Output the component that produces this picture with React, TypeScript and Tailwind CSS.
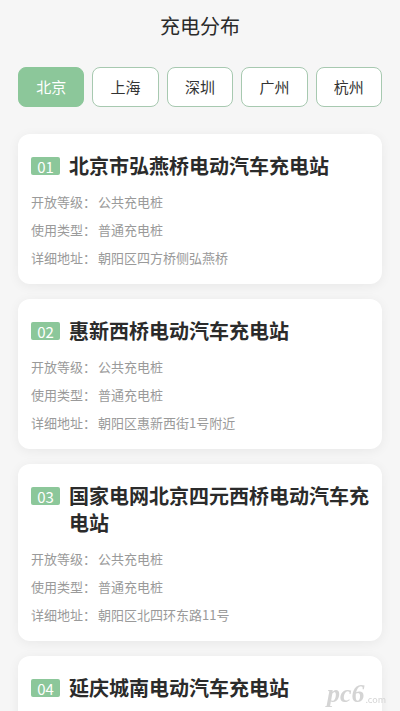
import React, { useState } from 'react';

interface Station {
    name: string;
    level: string;
    kind: string;
    address: string;
}

const cities = ['北京', '上海', '深圳', '广州', '杭州'];

const stations: Station[] = [
    { name: '北京市弘燕桥电动汽车充电站', level: '公共充电桩', kind: '普通充电桩', address: '朝阳区四方桥侧弘燕桥' },
    { name: '惠新西桥电动汽车充电站', level: '公共充电桩', kind: '普通充电桩', address: '朝阳区惠新西街1号附近' },
    { name: '国家电网北京四元西桥电动汽车充电站', level: '公共充电桩', kind: '普通充电桩', address: '朝阳区北四环东路11号' },
    { name: '延庆城南电动汽车充电站', level: '公共充电桩', kind: '普通充电桩', address: '延庆区城南街道' },
];

const StationCard: React.FC<{ index: number; station: Station }> = ({ index, station }) => {
    const num = String(index + 1).padStart(2, '0');
    return (
        <div className="bg-white rounded-[12px] shadow-[0_2px_12px_rgba(0,0,0,0.06)] px-[13px] pt-[18px] pb-[12px]">
            <div className="flex items-start gap-[9px]">
                <span className="mt-[5px] h-[18px] w-[29px] flex items-center justify-center bg-[#8cc79a] text-white text-[15px] leading-none rounded-[2px]">
                    {num}
                </span>
                <h3 className="flex-1 text-[20px] leading-[27px] font-bold text-[#2b2b2b]">{station.name}</h3>
            </div>
            {/* info rows */}
            <div className="mt-[9px] text-[13px] leading-[28px] text-[#9a9a9a]">
                <div className="flex"><span className="w-[67px]">开放等级：</span><span>{station.level}</span></div>
                <div className="flex"><span className="w-[67px]">使用类型：</span><span>{station.kind}</span></div>
                <div className="flex"><span className="w-[67px]">详细地址：</span><span>{station.address}</span></div>
            </div>
        </div>
    );
};

export default function App() {
    const [active, setActive] = useState(0);

    return (
        <div
            className="relative min-h-[711px] bg-[#f6f6f6]"
            style={{ fontFamily: '"Noto Sans CJK SC", "Noto Sans", sans-serif' }}
        >
            <header className="h-[52px] flex items-center justify-center text-[20px] text-[#2b2b2b]">
                充电分布
            </header>

            <div className="px-[18px] pt-[15px] flex gap-[8px]">
                {cities.map((c, i) => (
                    <button
                        key={c}
                        onClick={() => setActive(i)}
                        className={
                            i === active
                                ? 'flex-1 h-[40px] rounded-[8px] bg-[#8cc79a] text-white text-[15px] border border-[#8cc79a]'
                                : 'flex-1 h-[40px] rounded-[8px] bg-white text-[#333333] text-[15px] border border-[#a7c9b0]'
                        }
                    >
                        {c}
                    </button>
                ))}
            </div>

            <div className="px-[18px] pt-[27px] pb-6 flex flex-col gap-[15px]">
                {stations.map((s, i) => (
                    <StationCard key={s.name} index={i} station={s} />
                ))}
            </div>

            {/* watermark */}
            <div className="fixed right-[14px] bottom-[4px] flex items-end text-[#d4d4d4] leading-none select-none">
                <span className="text-[26px] italic font-bold" style={{ fontFamily: '"Liberation Serif", serif' }}>pc6</span>
                <span className="text-[9px] ml-[1px] mb-[3px]">.com</span>
            </div>
        </div>
    );
}
